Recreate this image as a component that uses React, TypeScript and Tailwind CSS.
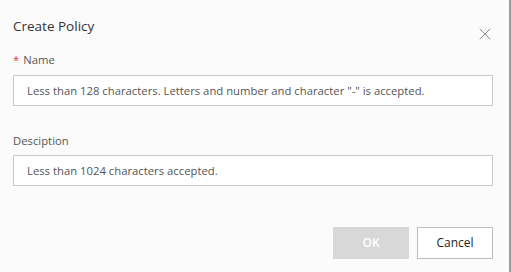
import { X } from 'lucide-react'

export default function App() {
  return (
    <div className="h-[272px] w-[511px] bg-[#fbfbfb] border-r-2 border-[#9a9a9a] font-['Open_Sans',sans-serif] text-[#333]">
      <div className="relative px-[13px] pt-[16px]">
        <h1 className="text-[13.5px] leading-[20px] text-[#333]">Create Policy</h1>
        <button className="absolute right-[14px] top-[24px] text-[#777]">
          <X size={20} strokeWidth={1} />
        </button>
      </div>

      <div className="px-[13px] pr-[16px]">
        <label className="mt-[14px] flex items-center gap-[4px] text-[11.3px] leading-[20px] text-[#555]">
          <span className="text-[#e0393e]">*</span>
          Name
        </label>
        <input
          className="mt-[5px] h-[31px] w-full border border-[#c9c9c9] bg-white px-[13px] text-[11.3px] text-[#555] outline-none placeholder:text-[#555]"
          placeholder={'Less than 128 characters. Letters and number and character "-" is accepted.'}
        />

        <label className="mt-[25px] block text-[11.3px] leading-[20px] text-[#555]">Desciption</label>
        <input
          className="mt-[4px] h-[31px] w-full border border-[#c9c9c9] bg-white px-[13px] text-[11.3px] text-[#555] outline-none placeholder:text-[#555]"
          placeholder="Less than 1024 characters accepted."
        />

        <div className="mt-[41px] flex justify-end gap-[8px]">
          <button className="h-[32px] w-[76px] bg-[#d8d8d8] text-[12px] font-semibold text-white">OK</button>
          <button className="h-[32px] w-[76px] border border-[#bcbcbc] bg-white text-[12px] text-[#222]">Cancel</button>
        </div>
      </div>
    </div>
  )
}
